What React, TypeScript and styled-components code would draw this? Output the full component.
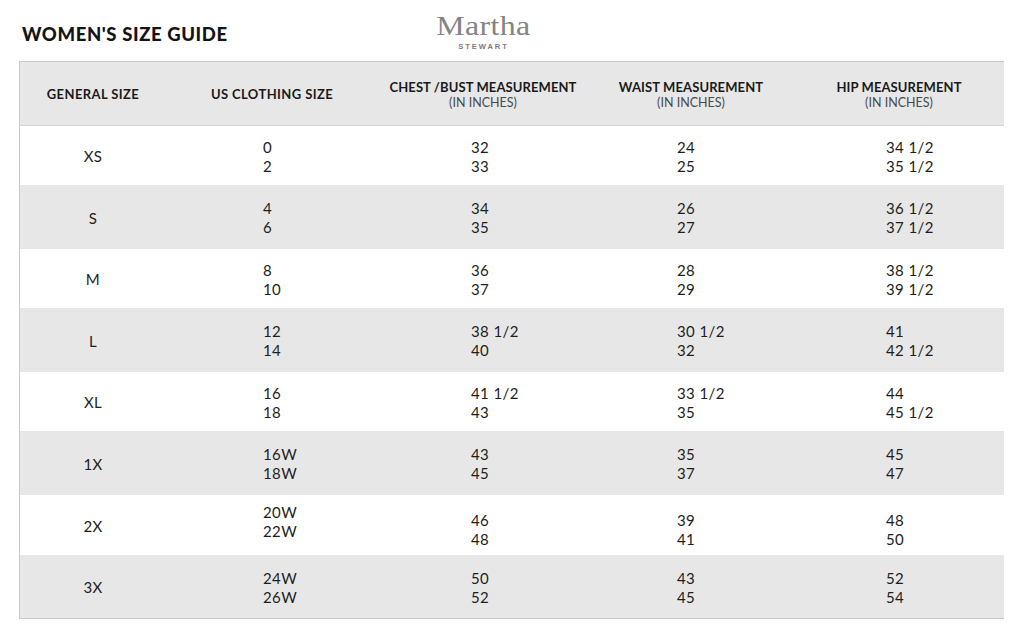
import React from "react";
import styled, { createGlobalStyle } from "styled-components";

const Global = createGlobalStyle`
  html, body { margin: 0; padding: 0; background: #ffffff; }
  body { font-family: Lato, "Noto Sans", "Liberation Sans", sans-serif; color: #1e1e1e; }
`;

const Page = styled.div`
  width: 1024px;
  height: 638px;
  box-sizing: border-box;
  padding: 14px 20px 0 19px;
  display: flex;
  flex-direction: column;
`;

const TopBar = styled.div`
  height: 47px;
  display: flex;
  align-items: flex-start;
  position: relative;
`;

const Title = styled.h1`
  margin: 9px 0 0 3px;
  font-size: 18.5px;
  font-weight: 900;
  letter-spacing: 0.6px;
  color: #141414;
`;

const Logo = styled.div`
  position: absolute;
  left: 416px;
  top: -4px;
  width: 97px;
  display: flex;
  flex-direction: column;
  align-items: center;
  color: #8a8a8a;
`;

const LogoName = styled.span`
  font-family: "Liberation Serif", "DejaVu Serif", serif;
  font-size: 28px;
  line-height: 31px;
  letter-spacing: 0.3px;
  transform: scaleX(1.14);
  color: #858585;
`;

const LogoSub = styled.span`
  font-family: "Liberation Sans", Arial, sans-serif;
  font-size: 7.5px;
  font-weight: 700;
  letter-spacing: 2px;
  margin-top: 1px;
  color: #7c7c7c;
`;

const Table = styled.div`
  border: 1px solid #c9c9c9;
  display: grid;
  grid-template-columns: 146px 212px 210px 206px 210px;
`;

const HeadCell = styled.div`
  height: 64px;
  background: #e7e7e7;
  border-bottom: 1px solid #d6d6d6;
  display: flex;
  flex-direction: column;
  align-items: center;
  justify-content: center;
  text-align: center;
  padding-top: 1px;
  box-sizing: border-box;
`;

const HeadMain = styled.span<{ $wide?: boolean }>`
  font-size: 13px;
  font-weight: 700;
  line-height: 16px;
  color: #1a1a1a;
  letter-spacing: ${(p) => (p.$wide ? 0.4 : 0.1)}px;
`;

const HeadSub = styled.span`
  font-size: 12.5px;
  font-weight: 400;
  line-height: 15px;
  color: #4a4a4a;
`;

const Cell = styled.div<{ $h: number; $shade: boolean; $pad: number | null; $shift: number }>`
  height: ${(p) => p.$h}px;
  background: ${(p) => (p.$shade ? "#e7e7e7" : "#ffffff")};
  display: flex;
  flex-direction: column;
  justify-content: center;
  align-items: ${(p) => (p.$pad === null ? "center" : "flex-start")};
  padding-left: ${(p) => (p.$pad === null ? 0 : p.$pad)}px;
  padding-top: ${(p) => 2 + Math.max(0, p.$shift * 2)}px;
  padding-bottom: ${(p) => Math.max(0, -p.$shift * 2)}px;
  box-sizing: border-box;
  font-size: 15px;
  line-height: 19px;
  letter-spacing: 0.4px;
  color: #1e1e1e;
`;

const Value = styled.span`
  white-space: nowrap;
`;

type Row = {
  size: string;
  h: number;
  us: [string, string];
  chest: [string, string];
  waist: [string, string];
  hip: [string, string];
  usShift?: number;
  restShift?: number;
};

const rows: Row[] = [
  { size: "XS", h: 59, us: ["0", "2"], chest: ["32", "33"], waist: ["24", "25"], hip: ["34 1/2", "35 1/2"] },
  { size: "S", h: 64, us: ["4", "6"], chest: ["34", "35"], waist: ["26", "27"], hip: ["36 1/2", "37 1/2"] },
  { size: "M", h: 59, us: ["8", "10"], chest: ["36", "37"], waist: ["28", "29"], hip: ["38 1/2", "39 1/2"] },
  { size: "L", h: 64, us: ["12", "14"], chest: ["38 1/2", "40"], waist: ["30 1/2", "32"], hip: ["41", "42 1/2"] },
  { size: "XL", h: 59, us: ["16", "18"], chest: ["41 1/2", "43"], waist: ["33 1/2", "35"], hip: ["44", "45 1/2"] },
  { size: "1X", h: 64, us: ["16W", "18W"], chest: ["43", "45"], waist: ["35", "37"], hip: ["45", "47"] },
  { size: "2X", h: 60, us: ["20W", "22W"], chest: ["46", "48"], waist: ["39", "41"], hip: ["48", "50"], usShift: -4, restShift: 4 },
  { size: "3X", h: 63, us: ["24W", "26W"], chest: ["50", "52"], waist: ["43", "45"], hip: ["52", "54"] },
];

const headers: [string, string | null][] = [
  ["GENERAL SIZE", null],
  ["US CLOTHING SIZE", null],
  ["CHEST /BUST MEASUREMENT", "(IN INCHES)"],
  ["WAIST MEASUREMENT", "(IN INCHES)"],
  ["HIP MEASUREMENT", "(IN INCHES)"],
];

const pads = [97, 93, 89, 92];

export default function App() {
  return (
    <>
      <Global />
      <Page>
        <TopBar>
          <Title>WOMEN'S SIZE GUIDE</Title>
          <Logo>
            <LogoName>Martha</LogoName>
            <LogoSub>STEWART</LogoSub>
          </Logo>
        </TopBar>
        <Table>
          {headers.map(([main, sub]) => (
            <HeadCell key={main}>
              <HeadMain $wide={!sub}>{main}</HeadMain>
              {sub && <HeadSub>{sub}</HeadSub>}
            </HeadCell>
          ))}
          {rows.map((r, i) => {
            const shade = i % 2 === 1;
            const cols = [r.us, r.chest, r.waist, r.hip];
            return (
              <React.Fragment key={r.size}>
                <Cell $h={r.h} $shade={shade} $pad={null} $shift={0}>
                  <Value>{r.size}</Value>
                </Cell>
                {cols.map((vals, c) => (
                  <Cell
                    key={c}
                    $h={r.h}
                    $shade={shade}
                    $pad={pads[c]}
                    $shift={c === 0 ? r.usShift ?? 0 : r.restShift ?? 0}
                  >
                    <Value>{vals[0]}</Value>
                    <Value>{vals[1]}</Value>
                  </Cell>
                ))}
              </React.Fragment>
            );
          })}
        </Table>
      </Page>
    </>
  );
}
